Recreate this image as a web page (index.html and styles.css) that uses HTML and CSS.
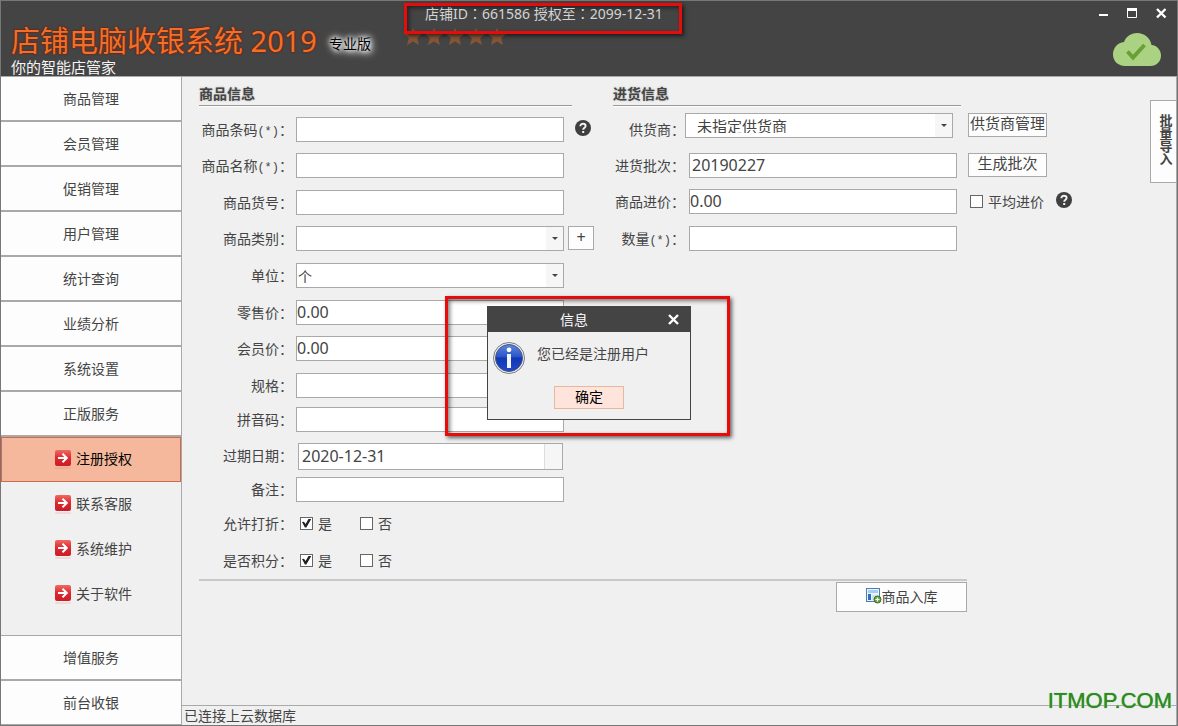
FILE: index.html
```html
<!DOCTYPE html>
<html lang="zh-CN">
<head>
<meta charset="utf-8">
<title>店铺电脑收银系统 2019</title>
<link rel="stylesheet" href="styles.css">
</head>
<body>
<svg class="defs" aria-hidden="true">
  <defs>
    <linearGradient id="red" x1="0" y1="0" x2="0" y2="1"><stop offset="0" stop-color="#ee6a62"/><stop offset=".5" stop-color="#dd2830"/><stop offset="1" stop-color="#c81e28"/></linearGradient>
    <linearGradient id="blue" x1="0" y1="0" x2="0" y2="1"><stop offset="0" stop-color="#5f86e0"/><stop offset=".45" stop-color="#2a56c8"/><stop offset=".5" stop-color="#1038b4"/><stop offset="1" stop-color="#2048c8"/></linearGradient>
    <g id="go">
      <rect x="0" y="0" width="16" height="16" rx="2" fill="url(#red)"/>
      <rect x="0" y="17" width="16" height="2" rx="1" fill="#e8604c" opacity=".15"/>
      <path d="M3 8h8M7.500 3.800 11.800 8l-4.300 4.200" fill="none" stroke="#fff" stroke-width="2"/>
    </g>
    <symbol id="star" viewBox="0 0 18 18"><path d="M9 0 11.600 6H18l-4.800 4.200L15 17 9 13.500 3 17l1.800-6.800L0 6h6.400z" fill="#865537"/></symbol>
    <symbol id="help" viewBox="0 0 16 16">
      <circle cx="8" cy="8" r="8" fill="#3f3f3f"/>
      <path d="M5.400 6.300C5.400 4.500 6.500 3.800 8 3.800s2.600.8 2.600 2.200C10.600 7.700 8.200 7.700 8.200 9.700" fill="none" stroke="#f4f4f4" stroke-width="1.900"/>
      <rect x="7.200" y="11" width="2" height="2" fill="#f4f4f4"/>
    </symbol>
  </defs>
</svg>
<div class="window">
  <header class="header">
    <div class="brand">
      <div class="brand-row"><h1 class="title">店铺电脑收银系统 2019</h1><span class="edition">专业版</span></div>
      <p class="slogan">你的智能店管家</p>
    </div>
    <div class="license">
      <p class="license-text marked">店铺ID<span class="colon" lang="zh-TW">：</span>661586 授权至<span class="colon" lang="zh-TW">：</span>2099-12-31</p>
      <div class="stars">
        <svg><use href="#star"/></svg><svg><use href="#star"/></svg><svg><use href="#star"/></svg><svg><use href="#star"/></svg><svg><use href="#star"/></svg>
      </div>
    </div>
    <div class="header-right">
      <div class="win-buttons">
        <button type="button" aria-label="最小化"><svg viewBox="0 0 11 11"><path d="M1 7h9" stroke="#fff" stroke-width="2"/></svg></button>
        <button type="button" aria-label="最大化"><svg viewBox="0 0 11 11"><path d="M.5 1v8.500h9V1" fill="none" stroke="#fff"/><path d="M0 1.500h10" stroke="#fff" stroke-width="3"/></svg></button>
        <button type="button" aria-label="关闭"><svg viewBox="0 0 11 11"><path d="M1 1l8.500 8.500M9.500 1 1 9.500" stroke="#fff" stroke-width="2.400"/></svg></button>
      </div>
      <svg class="cloud" viewBox="0 0 48 33">
        <path d="M12 33C5 33 0 28 0 21.500 0 15 4.500 9.500 11 9 13 3.500 18 0 24 0c7.500 0 13.500 5 14.500 12C44 12.500 48 17 48 22.500 48 28.500 43.500 33 37.500 33z" fill="#abd282"/>
        <path d="M14.500 18.500 20 24.500 31.500 12" fill="none" stroke="#68a035" stroke-width="4"/>
      </svg>
    </div>
  </header>

  <div class="body">
    <nav class="sidebar">
      <button type="button" class="menu">商品管理</button>
      <button type="button" class="menu">会员管理</button>
      <button type="button" class="menu">促销管理</button>
      <button type="button" class="menu">用户管理</button>
      <button type="button" class="menu">统计查询</button>
      <button type="button" class="menu">业绩分析</button>
      <button type="button" class="menu">系统设置</button>
      <button type="button" class="menu">正版服务</button>
      <button type="button" class="submenu active"><svg><use href="#go"/></svg>注册授权</button>
      <button type="button" class="submenu"><svg><use href="#go"/></svg>联系客服</button>
      <button type="button" class="submenu"><svg><use href="#go"/></svg>系统维护</button>
      <button type="button" class="submenu"><svg><use href="#go"/></svg>关于软件</button>
      <div class="spacer"></div>
      <button type="button" class="menu">增值服务</button>
      <button type="button" class="menu">前台收银</button>
    </nav>

    <div class="content">
      <div class="workspace">
        <form class="form">
          <div class="columns">
            <section class="goods">
              <h2 class="heading">商品信息</h2>
              <div class="rows goods-rows">
                <label for="code">商品条码<span class="req">(*)</span>：</label><div class="field"><input class="text" id="code"><svg class="help"><use href="#help"/></svg></div>
                <label for="name">商品名称<span class="req">(*)</span>：</label><div class="field"><input class="text" id="name"></div>
                <label for="no">商品货号：</label><div class="field"><input class="text" id="no"></div>
                <label for="cat">商品类别：</label><div class="field"><span class="select"><select id="cat"><option></option></select></span><button type="button" class="btn plus">+</button></div>
                <label for="unit">单位：</label><div class="field"><span class="select unit"><select id="unit"><option>个</option></select></span></div>
                <label for="price">零售价：</label><div class="field"><input class="text" id="price" value="0.00"></div>
                <label for="vip">会员价：</label><div class="field"><input class="text" id="vip" value="0.00"></div>
                <label for="spec">规格：</label><div class="field"><input class="text" id="spec"></div>
                <label for="pinyin">拼音码：</label><div class="field"><input class="text" id="pinyin"></div>
                <label for="date">过期日期：</label><div class="field"><span class="date"><input id="date" value="2020-12-31"><button type="button" aria-label="选择日期"></button></span></div>
                <label for="note">备注：</label><div class="field"><input class="text" id="note"></div>
                <span class="label">允许打折：</span><div class="field checks"><label class="check"><input type="checkbox" checked>是</label><label class="check"><input type="checkbox">否</label></div>
                <span class="label">是否积分：</span><div class="field checks"><label class="check"><input type="checkbox" checked>是</label><label class="check"><input type="checkbox">否</label></div>
              </div>
            </section>
            <section class="stock">
              <h2 class="heading">进货信息</h2>
              <div class="rows stock-rows">
                <label for="supplier">供货商：</label><div class="field supplier"><span class="select"><select id="supplier"><option>未指定供货商</option></select></span><button type="button" class="btn side">供货商管理</button></div>
                <label for="batch">进货批次：</label><div class="field"><input class="text batch" id="batch" value="20190227"><button type="button" class="btn side">生成批次</button></div>
                <label for="cost">商品进价：</label><div class="field"><input class="text" id="cost" value="0.00"><label class="check average"><input type="checkbox">平均进价</label><svg class="help"><use href="#help"/></svg></div>
                <label for="qty">数量<span class="req">(*)</span>：</label><div class="field"><input class="text" id="qty"></div>
              </div>
            </section>
          </div>
          <div class="actions">
            <button type="button" class="btn save"><svg viewBox="0 0 16 16">
              <rect x=".5" y=".5" width="13" height="13" fill="#eaf3fc" stroke="#4a7db5"/>
              <rect x="2" y="2" width="10" height="3" fill="#a9cdf0"/><rect x="2" y="6" width="3" height="6" fill="#2f6eb8"/><rect x="6" y="7" width="6" height="5" fill="#cde2f6"/>
              <circle cx="11.500" cy="11.500" r="3.500" fill="#67a544" stroke="#3c6e25"/><path d="M9.500 11.500h4M11.500 9.500v4" stroke="#fff" stroke-width="1.200"/>
            </svg>商品入库</button>
          </div>
        </form>
        <button type="button" class="import">批量导入</button>
      </div>
      <footer class="status">已连接上云数据库</footer>
    </div>
  </div>

  <div class="callout marked">
    <div class="dialog" role="dialog" aria-labelledby="dlg-title">
      <div class="dialog-bar"><h2 id="dlg-title">信息</h2><button type="button" aria-label="关闭"><svg viewBox="0 0 11 11"><path d="M1 1l9 9M10 1l-9 9" stroke="#fff" stroke-width="2.400"/></svg></button></div>
      <div class="dialog-body">
        <svg class="info" viewBox="0 0 32 32">
          <circle cx="16" cy="16" r="15.500" fill="#eef0f4" stroke="#777b84"/><circle cx="16" cy="16" r="13.500" fill="url(#blue)" stroke="#4a5678"/>
          <circle cx="16" cy="7.800" r="2.400" fill="#fff"/><path d="M14 12h4v14h-4z" fill="#f2f5ff"/>
        </svg>
        <p>您已经是注册用户</p>
      </div>
      <button type="button" class="ok">确定</button>
    </div>
  </div>
  <div class="watermark">ITMOP.COM</div>
</div>
</body>
</html>
```
FILE: styles.css
```css
* { box-sizing: border-box; }
body, h1, h2, p { margin: 0; font-weight: normal; }
body {
  font: 14px/24px "Noto Sans CJK SC", sans-serif;
  color: #444;
  background: #f0f0f0;
}
button, input, select { font: inherit; color: inherit; padding: 0; border: 0; border-radius: 0; margin: 0; }
button { background: none; white-space: nowrap; }
svg { flex: none; display: block; }
.defs { position: absolute; width: 0; height: 0; }

.window {
  position: relative;
  display: flex;
  flex-direction: column;
  min-height: 100vh;
  border: 1px solid #777;
}

/* Header */
.header { display: flex; background: #444; border-bottom: 1px solid #a9a9a9; }
.brand { flex: 0 0 403px; padding: 23px 0 0 10px; }
.brand-row { display: flex; align-items: center; gap: 12px; }
.title {
  font-family: "Noto Sans", "Noto Sans CJK SC", sans-serif;
  font-size: 29px;
  line-height: 34px;
  color: #f0702a;
  text-shadow: 0 0 2px #7a1c00, 0 0 2px #7a1c00;
  white-space: nowrap;
}
.edition {
  margin-top: 4px;
  color: #000;
  line-height: 20px;
  text-shadow: 0 0 4px #fff, 0 0 6px #fff, 0 0 8px #fff, 2px 2px 8px #ddd;
}
.slogan { font-size: 15px; line-height: 17px; padding-bottom: 1px; color: #f4f4f4; }
.license { padding-top: 2px; }
.marked { border: 3px solid #e60c0c; box-shadow: 2px 2px 4px rgba(0,0,0,.6), inset 2px 2px 4px rgba(0,0,0,.5); }
.license-text {
  position: relative;
  z-index: 1;
  height: 31px;
  padding: 0 16px 0 18px;
  font-family: "Noto Sans", "Noto Sans CJK SC", sans-serif;
  line-height: 15px;
  color: #d4d4d4;
  white-space: nowrap;
}
.colon { font-family: "Noto Sans CJK TC", sans-serif; }
.stars { display: flex; gap: 3px; margin-top: -6px; }
.stars svg { width: 18px; height: 18px; }
.header-right { margin-left: auto; padding: 7px 9px 0 0; display: flex; flex-direction: column; align-items: flex-end; gap: 14px; }
.win-buttons { display: flex; gap: 18px; margin-right: 1px; }
.win-buttons svg, .dialog-bar svg { width: 11px; height: 11px; }
.cloud { width: 48px; height: 33px; margin-right: 7px; }

/* Sidebar */
.body { flex: 1; display: flex; }
.sidebar { flex: 0 0 181px; display: flex; flex-direction: column; border-right: 1px solid #a9a9a9; }
.menu { height: 45px; padding-bottom: 2px; background: #fdfdfd; border-bottom: 2px solid #a9a9a9; }
.menu:last-child { height: 44px; border-bottom-width: 1px; }
.submenu { height: 45px; padding: 0 0 3px 54px; display: flex; align-items: center; gap: 5px; }
.submenu svg { width: 16px; height: 16px; overflow: visible; }
.active { background: #f6b89c; border: 1px solid #cf6a50; padding-left: 53px; color: #000; }
.spacer { flex: 1; border-bottom: 1px solid #a9a9a9; }

/* Content */
.content { flex: 1; display: flex; flex-direction: column; border-right: 1px solid #a9a9a9; }
.workspace { flex: 1; display: flex; justify-content: space-between; align-items: flex-start; padding-left: 17px; }
.status { height: 20px; padding-left: 2px; line-height: 18px; border-top: 1px solid #a9a9a9; }
.form { padding-top: 5px; }
.columns { display: flex; gap: 18px; height: 497px; }
.goods { width: 396px; }
.heading {
  height: 24px;
  font-size: 14px;
  line-height: 23px;
  font-weight: bold;
  border-bottom: 1px solid #999;
  box-shadow: 0 1px #fff;
  text-shadow: 0 0 2px #aaa;
}
.goods .heading { width: 373px; }
.stock .heading { width: 348px; }
.rows { display: grid; line-height: 24px; text-align: right; }
.goods-rows {
  padding-top: 11px;
  grid-template-columns: 94px 304px;
  column-gap: 3px;
  grid-template-rows: 36px 37px 36px 37px 37px 36px 37px 34px 36px 34px 34px 37px;
}
.stock-rows { padding-top: 11px; grid-template-columns: 72px 400px; column-gap: 4px; grid-template-rows: 36px 36px 37px; }
.req { font: 12px/20px "Liberation Mono", monospace; }
.field { display: flex; align-items: flex-start; text-align: left; }
.text, .date {
  width: 268px;
  height: 25px;
  border: 1px solid #a9a9a9;
  background: #fff;
  font: 16px/20px "Noto Sans", sans-serif;
}
.text, .date input { padding-bottom: 2px; }
.batch { padding-left: 2px; }
.select { position: relative; width: 268px; height: 25px; }
.select select {
  width: 100%;
  height: 25px;
  appearance: none;
  padding-left: 1px;
  padding-bottom: 2px;
  background: linear-gradient(#f6f6f6, #f6f6f6) right / 17px 100% no-repeat #fff;
  border: 1px solid #a9a9a9;
}
.select::after {
  content: "";
  position: absolute;
  right: 6px;
  top: 11px;
  border: 3px solid transparent;
  border-top-color: #444;
}
.date { display: flex; width: 265px; height: 27px; margin-left: 2px; }
.date input { flex: 1; min-width: 0; padding-left: 3px; }
.date button { width: 18px; background: #f6f6f6; border-left: 1px solid #ddd; }
.help { width: 16px; height: 16px; margin: 3px 0 0 11px; }
.btn { background: #fdfdfd; border: 1px solid #a9a9a9; padding-bottom: 2px; }
.plus { width: 26px; height: 24px; margin-left: 4px; font: 16px/20px "Noto Sans", sans-serif; }
.side { width: 79px; height: 24px; margin-left: 11px; padding-bottom: 4px; font-size: 15px; line-height: 18px; }
.supplier { margin: -4px 0 0 -4px; }
.supplier .side { margin-left: 15px; }
.supplier select { padding-left: 11px; padding-bottom: 4px; font-size: 15px; }
.checks { padding-left: 4px; gap: 28px; }
.check { display: flex; align-items: center; gap: 5px; }
.check input {
  appearance: none;
  position: relative;
  width: 13px;
  height: 13px;
  border: 1px solid #666;
  background: #fff;
}
.check input:checked::after {
  content: "";
  position: absolute;
  inset: 1px;
  background: #222;
  clip-path: polygon(0 40%, 22% 35%, 40% 60%, 75% 0, 100% 0, 100% 12%, 48% 100%, 32% 100%);
}
.average { margin-left: 13px; }
.average + .help { margin-left: 12px; }
.actions { width: 768px; border-top: 2px solid #c8c8c8; padding-top: 1px; display: flex; justify-content: flex-end; }
.save { width: 131px; height: 30px; display: flex; align-items: center; justify-content: center; gap: 0; }
.save svg { width: 16px; height: 16px; }
.import {
  width: 26px;
  height: 83px;
  margin-top: 23px;
  padding: 0 0 4px 4px;
  border: 1px solid #a9a9a9;
  border-right: 0;
  background: #fdfdfd;
  writing-mode: vertical-rl;
  font-size: 13px;
  font-weight: bold;
  line-height: 20px;
}

/* Message dialog */
.callout { position: absolute; left: 444px; top: 295px; padding: 7px 36px 13px 39px; }
.dialog { width: 204px; height: 114px; background: #f0f0f0; border: 1px solid #444; text-align: center; }
.dialog-bar { display: flex; align-items: center; height: 25px; padding-right: 11px; background: #444; color: #fff; }
.dialog-bar h2 { flex: 1; padding: 0 8px 2px 0; font-size: 14px; line-height: 22px; }
.dialog-body { display: flex; gap: 12px; height: 52px; padding: 10px 5px 0; }
.dialog-body p { line-height: 22px; }
.info { width: 32px; height: 32px; }
.ok { width: 70px; height: 23px; padding-bottom: 2px; line-height: 18px; background: #ffe4dc; border: 1px solid #e8b89c; color: #000; }

.watermark {
  position: absolute;
  right: 5px;
  bottom: 12px;
  font: 22px/24px "Liberation Sans", sans-serif;
  color: #2e8b22;
  text-shadow: 0 0 1px #2e8b22, 0 0 2px #fff;
}
```
